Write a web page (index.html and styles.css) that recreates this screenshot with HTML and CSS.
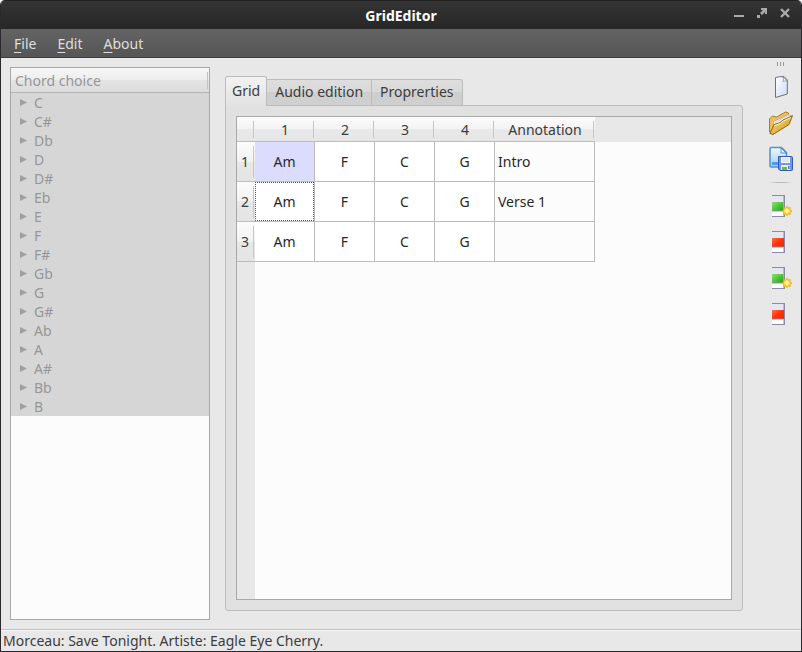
FILE: index.html
```html
<!DOCTYPE html>
<html lang="en">
<head>
<meta charset="utf-8">
<title>GridEditor</title>
<link rel="stylesheet" href="styles.css">
</head>
<body>
<div class="window">
  <header class="titlebar">
    <h1>GridEditor</h1>
    <div class="window-controls">
      <button type="button" aria-label="Minimize"><svg width="12" height="12" viewBox="0 0 12 12"><path d="M1 8h10v2H1z" fill="#aaa"/></svg></button>
      <button type="button" aria-label="Maximize"><svg width="12" height="12" viewBox="0 0 12 12"><path d="M1 8h3v3H1zM5 1h6v6H9V5L6 8 4 6l3-3H5z" fill="#aaa"/></svg></button>
      <button type="button" aria-label="Close"><svg width="12" height="12" viewBox="0 0 12 12"><path d="M2 2l8 8M10 2l-8 8" stroke="#aaa" stroke-width="2.4"/></svg></button>
    </div>
  </header>
  <nav class="menubar">
    <button type="button"><u>F</u>ile</button>
    <button type="button"><u>E</u>dit</button>
    <button type="button"><u>A</u>bout</button>
  </nav>
  <main class="workspace">
    <aside class="chords">
      <h2>Chord choice</h2>
      <ul>
        <li><button type="button" disabled>C</button></li>
        <li><button type="button" disabled>C#</button></li>
        <li><button type="button" disabled>Db</button></li>
        <li><button type="button" disabled>D</button></li>
        <li><button type="button" disabled>D#</button></li>
        <li><button type="button" disabled>Eb</button></li>
        <li><button type="button" disabled>E</button></li>
        <li><button type="button" disabled>F</button></li>
        <li><button type="button" disabled>F#</button></li>
        <li><button type="button" disabled>Gb</button></li>
        <li><button type="button" disabled>G</button></li>
        <li><button type="button" disabled>G#</button></li>
        <li><button type="button" disabled>Ab</button></li>
        <li><button type="button" disabled>A</button></li>
        <li><button type="button" disabled>A#</button></li>
        <li><button type="button" disabled>Bb</button></li>
        <li><button type="button" disabled>B</button></li>
      </ul>
    </aside>
    <section class="editor">
      <div class="tabs" role="tablist">
        <button type="button" role="tab" class="tab active" aria-selected="true">Grid</button>
        <button type="button" role="tab" class="tab" aria-selected="false">Audio edition</button>
        <button type="button" role="tab" class="tab" aria-selected="false">Proprerties</button>
      </div>
      <div class="tab-panel" role="tabpanel">
        <div class="grid-view">
          <table>
            <colgroup><col class="col-index"><col class="col-chord"><col class="col-chord"><col class="col-chord"><col class="col-chord"><col class="col-note"></colgroup>
            <thead>
              <tr><th></th><th>1</th><th>2</th><th>3</th><th>4</th><th>Annotation</th></tr>
            </thead>
            <tbody>
              <tr><th>1</th><td class="selected">Am</td><td>F</td><td>C</td><td>G</td><td class="note">Intro</td></tr>
              <tr><th>2</th><td class="current">Am</td><td>F</td><td>C</td><td>G</td><td class="note">Verse 1</td></tr>
              <tr><th>3</th><td>Am</td><td>F</td><td>C</td><td>G</td><td class="note"></td></tr>
            </tbody>
          </table>
        </div>
      </div>
    </section>
    <div class="toolbar" role="toolbar">
      <div class="handle"><i></i><i></i><i></i></div>
      <button type="button" aria-label="New">
        <svg width="26" height="26" viewBox="0 0 26 26"><defs><linearGradient id="sheet" x1="0" y1="0" x2="1" y2="1"><stop offset="0" stop-color="#fff"/><stop offset="1" stop-color="#c9dcf8"/></linearGradient></defs><path d="M7.500 3.500Q11 2.500 16 2.500L19.300 6V20L7.500 23.500z" fill="url(#sheet)" stroke="#6d7178"/><path d="M15 3Q16 5 15 7.500Q17.500 6.500 19 7z" fill="#fff" stroke="#8b9097" stroke-width=".8"/></svg>
      </button>
      <button type="button" aria-label="Open">
        <svg width="26" height="26" viewBox="0 0 26 26"><defs><linearGradient id="folder" x1="0" y1="0" x2="1" y2="1"><stop offset="0" stop-color="#ffe28a"/><stop offset="1" stop-color="#c98f13"/></linearGradient></defs><path d="M1.500 9l3-3 4 1 9-5 3 1v4L3.500 23.500l-2-1.500z" fill="#eebf57" stroke="#b27a12"/><path d="M5.500 11.500L20.500 4.500l2 1-1 7L5 20z" fill="#fff" stroke="#a5a5a0" stroke-width=".8"/><path d="M7 12.500l14-7.500" stroke="#c6c6c6"/><path d="M2 23.500l4-9 6-2 3-2.500 9.500-4.500-3.500 9L5 24.500z" fill="url(#folder)" stroke="#8c6413"/><path d="M6.800 15.500l5.700-2 3-2.500 7.500-3.500" stroke="#fff0b8" fill="none"/></svg>
      </button>
      <button type="button" aria-label="Save">
        <svg width="26" height="26" viewBox="0 0 26 26"><defs><linearGradient id="saveblue" x1="0" y1="0" x2="0" y2="1"><stop offset="0" stop-color="#eff8ff"/><stop offset="1" stop-color="#a1cdf6"/></linearGradient></defs><path d="M2 2.500q0-1 1-1h10.500l5 5V20q0 1-1 1H3q-1 0-1-1z" fill="url(#saveblue)" stroke="#4b91dc" stroke-width="1.500"/><path d="M13 2v5h5z" fill="#fff" stroke="#4b91dc"/><rect x="4" y="16" width="8" height="3" fill="#4d9be2"/><path d="M10.500 10.500h13q1 0 1 1v12q0 1-1 1H12l-1.500-1.500z" fill="#7198dc" stroke="#315bad"/><rect x="13" y="11" width="9" height="6" fill="#f4f7fc"/><path d="M14 13h7M14 15h7" stroke="#b8c4d9" stroke-width=".7"/><rect x="13" y="19" width="9" height="5" fill="#e4efe3"/><path d="M14 21h5v3h-5z" fill="#72bf2b"/><path d="M20 20h1.500v3H20z" fill="#4d78c5"/></svg>
      </button>
      <hr>
      <button type="button" aria-label="Insert row">
        <svg width="26" height="26" viewBox="0 0 26 26"><defs><linearGradient id="green" x1="0" y1="0" x2="1" y2="1"><stop offset="0" stop-color="#8ce36a"/><stop offset="1" stop-color="#12a606"/></linearGradient></defs><path d="M4 3h12v20H4z" fill="#fff"/><path d="M4 3h12v6H4z" fill="#e4e6f1"/><path d="M4 2h13v22H4v-1h11.500V3H4z" fill="#8c8ba5"/><path d="M4 9h11.500v9H4z" fill="url(#green)"/><path d="M4 18h11.500" stroke="#9695b2"/><path d="M19 13.300l1.200 1.900 2.100-.6-.4 2.200 2 1.200-2 1.300.4 2.100-2.100-.5L19 22.700l-1.200-1.800-2.100.5.4-2.100-2-1.300 2-1.200-.4-2.200 2.100.6z" fill="#ffe24b" stroke="#eca817" stroke-width=".9"/><circle cx="19" cy="18" r="1.700" fill="#fffbd0"/></svg>
      </button>
      <button type="button" aria-label="Delete row">
        <svg width="26" height="26" viewBox="0 0 26 26"><defs><linearGradient id="red" x1="0" y1="0" x2="1" y2="1"><stop offset="0" stop-color="#ff704b"/><stop offset=".5" stop-color="#ff3208"/><stop offset="1" stop-color="#e62800"/></linearGradient></defs><path d="M4 3h12v20H4z" fill="#fff"/><path d="M4 3h12v6H4z" fill="#e4e6f1"/><path d="M4 2h13v22H4v-1h11.500V3H4z" fill="#8c8ba5"/><path d="M4 9h12v9H4z" fill="url(#red)"/><path d="M4 18h11.500" stroke="#a77d91"/></svg>
      </button>
      <button type="button" aria-label="Insert column">
        <svg width="26" height="26" viewBox="0 0 26 26"><path d="M4 3h12v20H4z" fill="#fff"/><path d="M4 3h12v6H4z" fill="#e4e6f1"/><path d="M4 2h13v22H4v-1h11.500V3H4z" fill="#8c8ba5"/><path d="M4 9h11.500v9H4z" fill="url(#green)"/><path d="M4 18h11.500" stroke="#9695b2"/><path d="M19 13.300l1.200 1.900 2.100-.6-.4 2.200 2 1.200-2 1.300.4 2.100-2.100-.5L19 22.700l-1.200-1.800-2.100.5.4-2.100-2-1.300 2-1.200-.4-2.200 2.100.6z" fill="#ffe24b" stroke="#eca817" stroke-width=".9"/><circle cx="19" cy="18" r="1.700" fill="#fffbd0"/></svg>
      </button>
      <button type="button" aria-label="Delete column">
        <svg width="26" height="26" viewBox="0 0 26 26"><path d="M4 3h12v20H4z" fill="#fff"/><path d="M4 3h12v6H4z" fill="#e4e6f1"/><path d="M4 2h13v22H4v-1h11.500V3H4z" fill="#8c8ba5"/><path d="M4 9h12v9H4z" fill="url(#red)"/><path d="M4 18h11.500" stroke="#a77d91"/></svg>
      </button>
    </div>
  </main>
  <footer class="status">Morceau: Save Tonight. Artiste: Eagle Eye Cherry.</footer>
</div>
</body>
</html>
```
FILE: styles.css
```css
* { box-sizing: border-box; }

body {
  margin: 0;
  background: #fff;
  color: #3c3c3c;
  font: 14px/19px "Noto Sans", "Open Sans", sans-serif;
}

button {
  margin: 0;
  padding: 0;
  border: 0;
  background: none;
  color: inherit;
  font: inherit;
}

svg { display: block; }

.window {
  display: flex;
  flex-direction: column;
  min-height: 100vh;
  overflow: hidden;
  border: 1px solid #2b292b;
  border-top: 0;
  border-radius: 5px 5px 0 0;
  background: #e8e8e8;
}

.titlebar {
  display: grid;
  grid-template-columns: 1fr auto 1fr;
  align-items: center;
  height: 29px;
  border-top: 1px solid #202020;
  background: linear-gradient(#343434, #272727);
}

.titlebar h1 {
  grid-column: 2;
  margin: 0;
  padding-top: 1px;
  color: #fff;
  font-size: 14px;
  font-weight: 700;
}

.window-controls {
  display: flex;
  gap: 11px;
  justify-content: flex-end;
  padding: 0 10px 4px 0;
}

.menubar {
  display: flex;
  gap: 21px;
  align-items: center;
  height: 29px;
  padding-left: 13px;
  border-bottom: 1px solid #3f3b3c;
  background: linear-gradient(#636363, #555);
  color: #dfdfdf;
}

.menubar u { text-underline-offset: 3px; }

.workspace {
  display: flex;
  flex: 1;
}

.chords {
  flex: 0 0 200px;
  margin: 9px 0 9px 9px;
  border: 1px solid #a8a8a8;
  background: #fcfcfc;
  color: #969696;
}

.chords h2 {
  position: relative;
  height: 25px;
  margin: 0;
  padding: 3px 4px;
  border-bottom: 1px solid #b4b4b4;
  background: linear-gradient(#f7f7f7, #ededed 50%, #e4e4e4 50%, #dcdcdc);
  font-size: 14px;
  font-weight: 400;
}

.chords h2::after {
  content: "";
  position: absolute;
  top: 4px;
  right: 1px;
  bottom: 3px;
  width: 1px;
  background: #c3c3c3;
}

.chords ul {
  margin: 0;
  padding: 0;
  background: #d6d6d6;
  list-style: none;
}

.chords li { height: 19px; }

.chords li button {
  display: flex;
  gap: 7px;
  align-items: center;
  height: 19px;
  padding-left: 9px;
}

.chords li button::before {
  content: "";
  width: 7px;
  height: 7px;
  background: #a0a0a0;
  clip-path: polygon(0 0, 100% 50%, 0 100%);
}

.editor {
  display: flex;
  flex: 1;
  flex-direction: column;
  min-width: 0;
  margin: 18px 17px 18px 15px;
}

.tabs {
  position: relative;
  display: flex;
  align-items: flex-end;
  height: 30px;
  margin-bottom: -1px;
}

.tab {
  height: 27px;
  padding: 0 8px 2px;
  border: 1px solid #bcbcbc;
  border-left: 0;
  background: linear-gradient(#dedede, #d8d8d8 50%, #cecece 50%, #d0d0d0);
}

.tab:last-child { border-radius: 0 3px 0 0; }

.tab.active {
  height: 30px;
  padding: 0 6px 2px;
  border-left: 1px solid #bcbcbc;
  border-bottom: 0;
  border-radius: 3px 3px 0 0;
  background: linear-gradient(#f2f2f2, #e2e2e2);
}

.tab-panel {
  display: flex;
  flex: 1;
  padding: 10px;
  border: 1px solid #bcbcbc;
  border-radius: 0 3px 3px 3px;
  background: #e1e1e1;
}

.grid-view {
  flex: 1;
  border: 1px solid #a8a8a8;
  background:
    linear-gradient(#e8e8e8, #e8e8e8) 0 0 / 100% 25px no-repeat,
    linear-gradient(#e8e8e8, #e8e8e8) 0 0 / 18px 100% no-repeat,
    #fcfcfc;
}

table {
  width: 358px;
  border-spacing: 0;
  table-layout: fixed;
}

.col-index { width: 18px; }
.col-chord { width: 60px; }
.col-note { width: 100px; }

th,
td {
  padding: 0;
  font-weight: 400;
  text-align: center;
}

thead th {
  height: 25px;
  border-bottom: 1px solid #bcbcbc;
  background:
    linear-gradient(#c6c6c6, #c6c6c6) calc(100% - 1px) 4px / 1px 17px no-repeat,
    linear-gradient(#fcfcfc, #f3f3f3 50%, #e9e9e9 50%, #e6e6e6);
}

tbody th {
  height: 40px;
  padding-right: 2px;
  border-bottom: 1px solid #bcbcbc;
  background:
    linear-gradient(#c6c6c6, #c6c6c6) calc(100% - 1px) 4px / 1px 32px no-repeat,
    linear-gradient(#fcfcfc, #f2f2f2 50%, #e8e8e8 50%, #e4e4e4);
}

td {
  border-right: 1px solid #bcbcbc;
  border-bottom: 1px solid #bcbcbc;
  background: #fff;
  color: #282828;
}

.selected { background: #dcdcff; }

.current {
  background:
    repeating-linear-gradient(90deg, #555 0 1px, #fff 1px 2px) 0 0 / 100% 1px no-repeat,
    repeating-linear-gradient(90deg, #555 0 1px, #fff 1px 2px) 0 100% / 100% 1px no-repeat,
    repeating-linear-gradient(#555 0 1px, #fff 1px 2px) 0 0 / 1px 100% no-repeat,
    repeating-linear-gradient(#555 0 1px, #fff 1px 2px) 100% 0 / 1px 100% no-repeat,
    #fff;
}

.note {
  padding-left: 3px;
  background: #fcfcfc;
  text-align: left;
}

.toolbar {
  display: flex;
  flex: 0 0 41px;
  flex-direction: column;
  align-items: center;
}

.handle {
  display: flex;
  gap: 2px;
  height: 11px;
  padding: 4px 0 3px;
}

.handle i {
  width: 1px;
  background: #999;
}

.toolbar button {
  display: grid;
  place-items: center;
  width: 36px;
  height: 36px;
}

.toolbar hr {
  width: 20px;
  height: 1px;
  margin: 5px 0;
  border: 0;
  background: linear-gradient(90deg, #dedede, #bbb 30% 70%, #dedede);
}

.status {
  height: 22px;
  padding: 1px 2px;
  border-top: 1px solid #c3c3c3;
  box-shadow: inset 0 1px #f6f6f6;
}
```
